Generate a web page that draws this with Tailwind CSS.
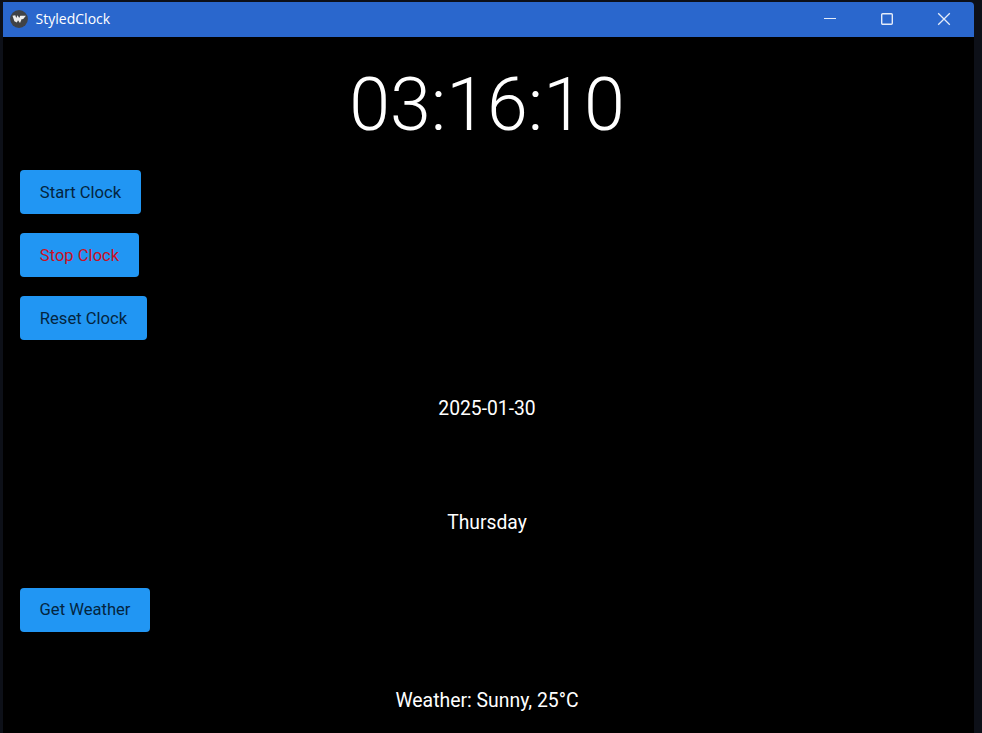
<!DOCTYPE html>
<html lang="en">
<head>
<meta charset="utf-8">
<title>StyledClock</title>
<script src="https://cdn.jsdelivr.net/npm/@tailwindcss/browser@4"></script>
</head>
<body class="h-[733px] w-[982px] overflow-hidden bg-[#0d1018] pl-[3px] pt-[2px] font-['Roboto',sans-serif]">
<div class="flex h-[731px] w-[971px] flex-col overflow-hidden rounded-tr-[4px] bg-black">
  <header class="flex h-[35px] shrink-0 items-center bg-[#2a67cd] pb-[2px] pl-[7px] text-[#e4ecf9]">
    <svg class="size-[18px] shrink-0" viewBox="0 0 18 18">
      <circle cx="9" cy="9" r="8.9" fill="#404347"/>
      <path d="M2.5 5.8 5.3 5.2 6.2 8 7.6 5.2 9.2 8 10.3 5.8 15.9 5.8 13 9.3 11.7 9.1 10 13 8 10.3 6.9 12.4 4.4 11.2Z" fill="#eeeeee"/>
    </svg>
    <h1 class="ml-[7.5px] font-['Open_Sans',sans-serif] text-[14px] leading-5 tracking-[0.02px] text-white">StyledClock</h1>
    <div class="ml-auto mr-[23px] flex items-center gap-[43px]">
      <svg class="h-[14px] w-[14px]" viewBox="0 0 14 14" fill="none" stroke="currentColor"><path d="M1 6.5H13" stroke-width="1.2"/></svg>
      <svg class="h-[14px] w-[14px]" viewBox="0 0 14 14" fill="none" stroke="currentColor" stroke-width="1.4"><rect x="1.7" y="1.7" width="10.6" height="10.6" rx="1"/></svg>
      <svg class="h-[14px] w-[14px]" viewBox="0 0 14 14" fill="none" stroke="currentColor" stroke-width="1.3"><path d="M1.2 1.2 12.8 12.8M12.8 1.2 1.2 12.8"/></svg>
    </div>
  </header>
  <main class="flex flex-col items-start pl-[17px] pr-[20px] text-white">
    <div class="flex h-[133.4px] w-full items-center justify-center pt-[4px] text-[73.5px] font-light leading-none">03:16:10</div>
    <div class="flex flex-col items-start gap-[19px] text-[16.6px] leading-[20px] text-[#04253f]">
      <button class="h-[44px] w-[121px] rounded-[4px] bg-[#2196f3] pt-[1px]">Start Clock</button>
      <button class="h-[44px] w-[119px] rounded-[4px] bg-[#2196f3] pt-[1px] text-[#cb1024]">Stop Clock</button>
      <button class="h-[44px] w-[127px] rounded-[4px] bg-[#2196f3] pt-[1px]">Reset Clock</button>
    </div>
    <p class="flex h-[134px] w-full items-center justify-center pt-[4px] text-[19.3px]">2025-01-30</p>
    <p class="flex h-[94px] w-full items-center justify-center pt-[4px] text-[19.3px]">Thursday</p>
    <button class="mt-[19.6px] h-[44px] w-[130px] rounded-[4px] bg-[#2196f3] pt-[1px] text-[16.6px] leading-[20px] text-[#04253f]">Get Weather</button>
    <p class="mt-[20px] flex h-[94px] w-full items-center justify-center pt-[3px] text-[19.4px]">Weather: Sunny, 25°C</p>
  </main>
</div>
</body>
</html>
